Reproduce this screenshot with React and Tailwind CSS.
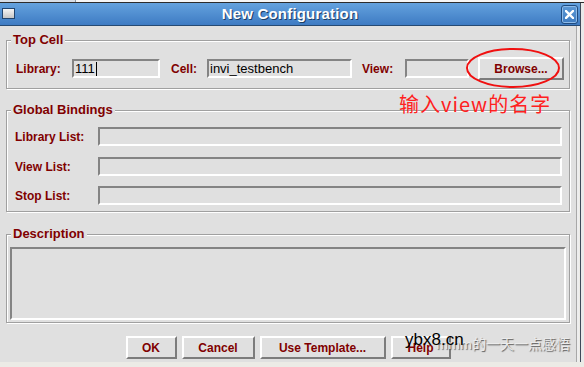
import React from "react";

const label = "font-['Liberation_Sans',Arial,sans-serif] font-bold text-[12px] text-[#800000]";
const sunken = "border-t-2 border-l-2 border-b-2 border-r-2 border-t-[#848484] border-l-[#848484] border-b-white border-r-white bg-[#e0e0e0]";
const raised = "border-t-2 border-l-2 border-b-2 border-r-2 border-t-white border-l-white border-b-[#7c7c7c] border-r-[#7c7c7c] bg-[#e0e0e0] flex items-center justify-center";

const Group = ({ title, className, children }) => (
  <div className={`relative border border-[#a0a0a0] shadow-[inset_1px_1px_0_#fff,1px_1px_0_#fff] ${className}`}>
    <span className={`absolute -top-[9px] left-[4px] px-[2px] bg-[#e0e0e0] leading-[16px] ${label} text-[13px]`}>
      {title}
    </span>
    {children}
  </div>
);

const Field = ({ className, children }) => (
  <div className={`${sunken} flex items-center pl-[1px] font-['Liberation_Sans',Arial,sans-serif] text-[13px] text-black ${className}`}>
    {children}
  </div>
);

const Button = ({ className, children }) => (
  <div className={`${raised} ${label} ${className}`}>{children}</div>
);

export default function App() {
  return (
    <div className="relative w-[584px] h-[367px] overflow-hidden bg-[#ecebe6] flex flex-col">
      {/* desktop strip above the window */}
      <div className="flex h-[2px]">
        <div className="w-[75px] bg-[#d6dde6]" />
        <div className="w-[1px] bg-[#8a96a4]" />
        <div className="flex-1 bg-[#f6f6f6]" />
      </div>
      <div className="h-[1px] bg-[#2c2c2c]" />

      <div className="flex">
        <div className="w-[581px] flex flex-col border-r border-[#3d4a5a]">
          {/* title bar */}
          <div className="relative h-[23px] flex items-center justify-center bg-gradient-to-b from-[#64a2de] to-[#3e7bc3] border-b border-[#264a73]">
            <div className="absolute left-[2px] top-[5px] w-[13px] h-[11px] border border-[#22456e] bg-gradient-to-b from-[#f6f6f6] to-[#c6c6c6]" />
            <span className="font-['Liberation_Sans',Arial,sans-serif] font-bold text-[15px] text-white [text-shadow:1px_1px_0_#1d3f66] tracking-[0.2px]">
              New Configuration
            </span>
            <div className="absolute right-[2px] top-[2px] w-[17px] h-[19px] rounded-[3px] border border-[#1f4b80] shadow-[inset_0_0_0_1px_#8ebbe8] bg-gradient-to-b from-[#5c98d4] to-[#3f7cc1] flex items-center justify-center">
              <svg width="9" height="9" viewBox="0 0 9 9">
                <path d="M1 1L8 8M8 1L1 8" stroke="#fff" strokeWidth="2.4" strokeLinecap="square" />
              </svg>
            </div>
          </div>

          {/* dialog body */}
          <div className="flex">
            <div className="w-[577px] h-[336px] bg-[#e0e0e0] px-[6px] pt-[14px] flex flex-col border-r border-[#a8a8a8]">
              <Group title="Top Cell" className="h-[49px] pt-[16px]">
                <div className="flex items-center h-[23px] pl-[9px]">
                  <span className={`${label} w-[56px]`}>Library:</span>
                  <Field className="w-[88px] h-[19px]">
                    <span>111</span>
                    <span className="ml-[1px] w-[1px] h-[14px] bg-black" />
                  </Field>
                  <span className={`${label} ml-[11px] w-[36px]`}>Cell:</span>
                  <Field className="w-[145px] h-[19px]">invi_testbench</Field>
                  <span className={`${label} ml-[10px] w-[43px]`}>View:</span>
                  <Field className="w-[64px] h-[19px]" />
                  <Button className="ml-[9px] w-[86px] h-[23px]">Browse...</Button>
                </div>
              </Group>

              <Group title="Global Bindings" className="mt-[21px] h-[102px] pt-[16px] pl-[8px] pr-[7px]">
                <div className="flex items-center">
                  <span className={`${label} w-[83px]`}>Library List:</span>
                  <Field className="flex-1 h-[19px]" />
                </div>
                <div className="flex items-center mt-[11px]">
                  <span className={`${label} w-[83px]`}>View List:</span>
                  <Field className="flex-1 h-[19px]" />
                </div>
                <div className="flex items-center mt-[10px]">
                  <span className={`${label} w-[83px]`}>Stop List:</span>
                  <Field className="flex-1 h-[19px]" />
                </div>
              </Group>

              <Group title="Description" className="mt-[22px] h-[89px] pt-[12px] px-[3px]">
                <div className={`${sunken} h-[73px]`} />
              </Group>

              <div className="mt-[13px] flex justify-center gap-[5px]">
                <Button className="w-[51px] h-[23px]">OK</Button>
                <Button className="w-[73px] h-[23px]">Cancel</Button>
                <Button className="w-[126px] h-[23px]">Use Template...</Button>
                <Button className="w-[60px] h-[23px]">Help</Button>
              </div>
            </div>
            <div className="w-[2px] bg-[#ededed]" />
          </div>
        </div>
        <div className="flex-1 bg-[#e9e9e9]" />
      </div>

      {/* red annotation over the screenshot */}
      <svg className="absolute left-[465px] top-[47px]" width="96" height="42" viewBox="0 0 96 42">
        <ellipse cx="48" cy="21" rx="46" ry="19" fill="none" stroke="#f01010" strokeWidth="2" />
      </svg>
      <span className="absolute left-[399px] top-[91px] whitespace-nowrap font-['Noto_Sans_CJK_SC',sans-serif] text-[20px] leading-[26px] tracking-[1px] text-[#ff2020]">
        输入view的名字
      </span>

      {/* watermark */}
      <span className="absolute left-[436px] top-[332px] whitespace-nowrap font-['Noto_Sans_CJK_SC',sans-serif] text-[14px] leading-[22px] text-[#ececec] [text-shadow:1px_1px_1px_#5a5a5a]">
        <span className="text-[13px]">mmm</span>的一天一点感悟
      </span>
      <span className="absolute left-[405px] top-[329px] whitespace-nowrap font-['Liberation_Sans',Arial,sans-serif] text-[17px] leading-[22px] text-black">
        ybx8.cn
      </span>
    </div>
  );
}
